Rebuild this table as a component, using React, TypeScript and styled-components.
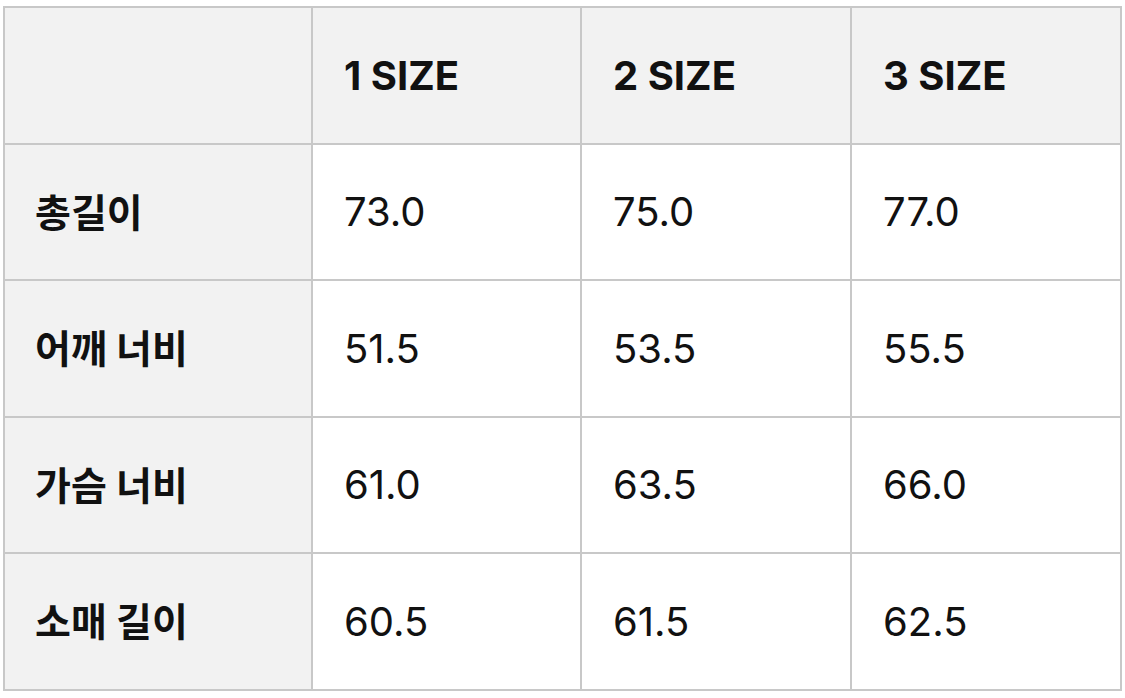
import React from "react";
import styled, { createGlobalStyle } from "styled-components";

const GlobalStyle = createGlobalStyle`
  html, body { margin: 0; padding: 0; background: #ffffff; }
  body {
    font-family: Inter, "Noto Sans CJK KR", "Noto Sans", sans-serif;
    color: #111111;
  }
`;

const Page = styled.div`
  padding: 6px 0 0 3px;
`;

const Table = styled.table`
  border-collapse: separate;
  border-spacing: 0;
  table-layout: fixed;
  border-top: 2px solid #c8c8c8;
  border-left: 2px solid #c8c8c8;
`;

const HeadCell = styled.th<{ $w: number }>`
  width: ${(p) => p.$w}px;
  box-sizing: border-box;
  height: 137px;
  padding: 0 0 0 31px;
  text-align: left;
  vertical-align: middle;
  background: #f2f2f2;
  border-right: 2px solid #c8c8c8;
  border-bottom: 2px solid #c8c8c8;
  font-size: 40px;
  font-weight: 700;
  line-height: 1;
`;

const LabelCell = styled.th<{ $h: number }>`
  box-sizing: border-box;
  height: ${(p) => p.$h}px;
  padding: 0 0 0 30px;
  text-align: left;
  vertical-align: middle;
  background: #f2f2f2;
  border-right: 2px solid #c8c8c8;
  border-bottom: 2px solid #c8c8c8;
  font-size: 39px;
  font-weight: 700;
  line-height: 1;
`;

const ValueCell = styled.td`
  box-sizing: border-box;
  padding: 0 0 0 31px;
  text-align: left;
  vertical-align: middle;
  background: #ffffff;
  border-right: 2px solid #c8c8c8;
  border-bottom: 2px solid #c8c8c8;
  font-size: 40px;
  font-weight: 400;
  line-height: 1;
`;

const widths = [308, 269, 270, 270];
const heights = [136, 137, 136, 137];

const rows = [
  { label: "총길이", values: ["73.0", "75.0", "77.0"] },
  { label: "어깨 너비", values: ["51.5", "53.5", "55.5"] },
  { label: "가슴 너비", values: ["61.0", "63.5", "66.0"] },
  { label: "소매 길이", values: ["60.5", "61.5", "62.5"] },
];

export default function App() {
  return (
    <>
      <GlobalStyle />
      <Page>
        <Table>
          <thead>
            <tr>
              <HeadCell $w={widths[0]} />
              <HeadCell $w={widths[1]}>1 SIZE</HeadCell>
              <HeadCell $w={widths[2]}>2 SIZE</HeadCell>
              <HeadCell $w={widths[3]}>3 SIZE</HeadCell>
            </tr>
          </thead>
          <tbody>
            {rows.map((r, i) => (
              <tr key={r.label}>
                <LabelCell $h={heights[i]}>{r.label}</LabelCell>
                {r.values.map((v) => (
                  <ValueCell key={v}>{v}</ValueCell>
                ))}
              </tr>
            ))}
          </tbody>
        </Table>
      </Page>
    </>
  );
}
